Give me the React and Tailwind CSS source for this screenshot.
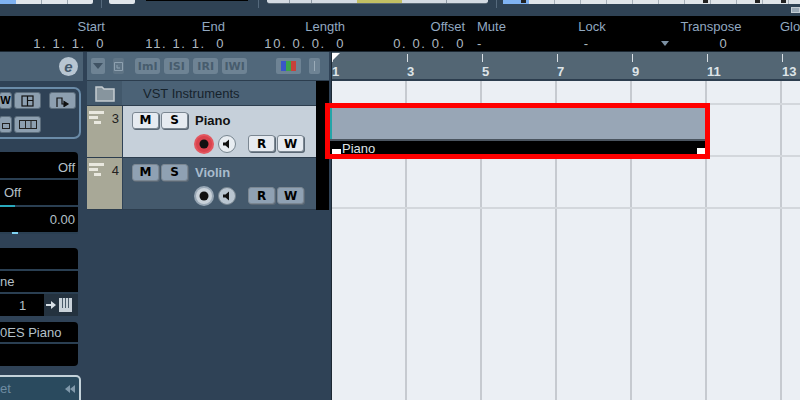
const barCells = [0, 1, 2, 3, 4, 5, 6];
const rulerLabels = ['1', '3', '5', '7', '9', '11', '13'];
const dividers = [0, 1, 2, 3, 4, 5, 6, 7, 8, 9, 10];
const markers = [6, 8, 9];

// Boutons de piste M S R W
const TrackButton = ({ label, active }) => (
    <div
        className={`w-[27px] h-[17px] rounded-[3px] border border-[#7b8792] shadow-[1px_1px_0_#5b6875] flex items-center justify-center text-[12px] font-bold leading-none text-black ${
            active ? 'bg-[#e6ebf1]' : 'bg-[#8fa1b3]'
        }`}
        style={{ fontFamily: '"DejaVu Sans", sans-serif' }}
    >
        {label}
    </div>
);

const LevelIcon = () => (
    <div className="flex flex-col gap-[2px] pt-[5px] pl-[2px]">
        <div className="w-[15px] h-[3px] bg-[#e9e8df]" />
        <div className="w-[9px] h-[3px] bg-[#e9e8df]" />
        <div className="w-[7px] h-[3px] ml-[5px] bg-[#e9e8df]" />
    </div>
);

const Track = ({ num, name, active }) => (
    <div className="flex h-[52px] border-b border-[#2c3d4e]">
        <div className="w-[35px] bg-[#a8a897] flex justify-between pr-[3px]">
            <LevelIcon />
            <span className="text-[13px] leading-none pt-[6px] text-[#222]">{num}</span>
        </div>
        <div className={`flex-1 ml-px flex flex-col pl-[9px] pr-[12px] ${active ? 'bg-[#c6d0da]' : 'bg-[#44596c]'}`}>
            <div className="flex items-center gap-[2px] pt-[5px] h-[23px]">
                <TrackButton label="M" active={active} />
                <TrackButton label="S" active={active} />
                <span className={`ml-[5px] text-[13px] font-bold leading-none ${active ? 'text-[#111]' : 'text-[#a9bccd]'}`}>{name}</span>
            </div>
            <div className="flex items-center justify-end mt-[4px] h-[21px]">
                <svg width="20" height="20" viewBox="0 0 20 20" className="mr-[4px]">
                    <circle cx="10" cy="10" r="10" fill={active ? '#e3565f' : '#98a7b5'} />
                    <circle cx="10" cy="10" r="8" fill={active ? '#d9434e' : '#c9d2da'} />
                    <circle cx="10" cy="10" r="4.5" fill="#111" />
                </svg>
                <svg width="18" height="18" viewBox="0 0 18 18" className="mr-[12px]">
                    <circle cx="9" cy="9" r="8.5" fill={active ? '#e8edf2' : '#b9c5d0'} stroke="#77858f" />
                    <path d="M5 7.5h2.5L11 4.5v9L7.5 10.5H5z" fill="#111" />
                </svg>
                <div className="flex gap-[2px]">
                    <TrackButton label="R" active={active} />
                    <TrackButton label="W" active={active} />
                </div>
            </div>
        </div>
    </div>
);

const HeaderButton = ({ label }) => (
    <div
        className="w-[25px] h-[16px] rounded-[3px] bg-[#6e8394] flex items-center justify-center text-[11px] font-bold leading-none text-[#475c6d]"
        style={{ fontFamily: '"DejaVu Sans", sans-serif' }}
    >
        {label}
    </div>
);

const InspectorButton = ({ children, width = 'w-[27px]', className = '' }) => (
    <div className={`${width} h-[17px] shrink-0 rounded-[3px] bg-[#8d9fb0] border border-[#5c6d7c] flex items-center justify-center overflow-hidden ${className}`}>
        {children}
    </div>
);

const Row = ({ height, children, className = '' }) => (
    <div className={`flex items-center border-b-2 border-[#2a3f52] text-[13px] leading-none text-[#b5c0c8] last:border-b-0 ${height} ${className}`}>
        {children}
    </div>
);

const InfoColumn = ({ label, value, width }) => (
    <div className={`${width} shrink-0 text-right`}>
        <div className="text-[#92a9c1]">{label}</div>
        <div className="text-[#aeb9c0] tracking-[1.6px]">{value}</div>
    </div>
);

export default function App() {
    return (
        <div
            className="relative w-[800px] h-[400px] overflow-hidden bg-[#2f4256] flex flex-col"
            style={{ fontFamily: '"Liberation Sans", Arial, sans-serif' }}
        >
            {/* Barre du haut */}
            <div className="h-[16px] shrink-0 bg-[#2f4254] flex items-start">
                <div className="w-[16px] shrink-0 h-[4px] bg-[#7fb2f2]" />
                <div className="w-[77px] shrink-0 h-[4px] bg-[#e1e6eb] rounded-br-[2px] flex">
                    <div className="w-[26px] border-r border-[#9aa6b0]" />
                    <div className="w-[26px] border-r border-[#9aa6b0]" />
                </div>
                <div className="w-px shrink-0 h-[8px] ml-[8px] bg-[#55697c]" />
                <div className="w-[26px] shrink-0 h-[4px] ml-[7px] bg-[#e1e6eb] rounded-b-[2px]" />
                <div className="w-[102px] shrink-0 h-[1px] ml-[11px] bg-black" />
                <div className="w-px shrink-0 h-[8px] ml-[10px] bg-[#55697c]" />
                <div className="flex shrink-0 h-[4px] ml-[8px] w-[221px] rounded-b-[3px] overflow-hidden border-b border-[#5c6b78]">
                    <div className="w-[23px] bg-[#d3dae2] border-r border-[#8d99a5]" />
                    <div className="w-[22px] bg-[#d3dae2] border-r border-[#8d99a5]" />
                    <div className="w-[45px] bg-[#d3dae2]" />
                    <div className="w-[45px] bg-[#c2bf63]" />
                    <div className="w-[45px] bg-[#d3dae2] border-r border-[#8d99a5]" />
                    <div className="flex-1 bg-[#d3dae2]" />
                </div>
                <div className="w-px shrink-0 h-[8px] ml-[8px] bg-[#55697c]" />
                <div className="w-[26px] shrink-0 h-[4px] ml-[6px] bg-[#7fb2f2] flex justify-end pr-[3px]">
                    <div className="w-[5px] h-[3px] bg-[#222]" />
                </div>
                <div className="flex-1 min-w-0 flex flex-col">
                    <div className="h-[4px] flex overflow-hidden bg-[#dfe4e9]">
                        {dividers.map((i) => (
                            <div key={i} className="w-[26px] h-full shrink-0 border-r border-[#a5afb8] flex justify-end">
                                {markers.includes(i) && <div className="w-[5px] h-[3px] mr-[2px] bg-[#222]" />}
                            </div>
                        ))}
                    </div>
                    <div className="ml-auto w-[9px] h-[6px] mt-[3px] bg-[#9aa9b6] border border-[#c3ccd4]" />
                </div>
            </div>

            {/* Ligne d'infos */}
            <div className="h-[36px] shrink-0 bg-black flex pt-[2px] text-[13px] leading-[17px] border-b border-[#1c2833]">
                <InfoColumn label="Start" value={<>1. 1. 1.&nbsp;&nbsp;0</>} width="w-[105px]" />
                <InfoColumn label="End" value={<>11. 1. 1.&nbsp;&nbsp;0</>} width="w-[120px]" />
                <InfoColumn label="Length" value={<>10. 0. 0.&nbsp;&nbsp;0</>} width="w-[120px]" />
                <InfoColumn label="Offset" value={<>0. 0. 0.&nbsp;&nbsp;0</>} width="w-[120px]" />
                <div className="w-[60px] shrink-0 pl-[12px]">
                    <div className="text-[#92a9c1]">Mute</div>
                    <div className="text-[#aeb9c0]">-</div>
                </div>
                <div className="w-[134px] shrink-0 text-center">
                    <div className="text-[#92a9c1]">Lock</div>
                    <div className="text-[#aeb9c0] pr-[12px]">-</div>
                </div>
                <div className="w-[20px] shrink-0 flex items-end pb-[5px] pl-[2px]">
                    <svg width="8" height="5" viewBox="0 0 8 5"><path d="M0 0h8L4 5z" fill="#7d91a4" /></svg>
                </div>
                <div className="w-[64px] shrink-0 text-center whitespace-nowrap">
                    <div className="text-[#92a9c1]">Transpose</div>
                    <div className="text-[#aeb9c0] pl-[24px]">0</div>
                </div>
                <div className="text-[#92a9c1] pl-[37px] shrink-0 whitespace-nowrap">Global</div>
            </div>

            <div className="flex flex-1 min-h-0">
                {/* Inspecteur */}
                <div className="w-[83px] shrink-0 flex flex-col overflow-hidden">
                    <div className="h-[29px] shrink-0 bg-[#4b6174] flex items-center justify-end pr-[5px]">
                        <div className="w-[19px] h-[19px] rounded-full bg-[#b8c6d2] flex items-center justify-center text-[15px] font-bold italic leading-none text-[#43596c]">
                            e
                        </div>
                    </div>
                    <div className="h-[52px] mt-[6px] mr-[2px] shrink-0 rounded-r-[7px] border-2 border-l-0 border-[#6a8ba8] flex flex-col gap-[7px] pt-[3px] pr-[3px]">
                        <div className="flex justify-end">
                            <InspectorButton width="w-[13px]" className="mr-[2px]"><span className="text-[11px] font-black text-black">W</span></InspectorButton>
                            <InspectorButton className="mr-[8px]">
                                <svg width="13" height="12" viewBox="0 0 13 12" fill="none" stroke="#111" strokeWidth="1.2">
                                    <rect x="1" y="1" width="11" height="10" /><path d="M6.5 1v10M6.5 5.5h5.5" />
                                </svg>
                            </InspectorButton>
                            <InspectorButton>
                                <svg width="15" height="12" viewBox="0 0 15 12" fill="none" stroke="#111" strokeWidth="1.2">
                                    <path d="M2 12V3h5v6h3" /><path d="M9 6.5l4 2.5-4 2.5z" fill="#111" />
                                </svg>
                            </InspectorButton>
                        </div>
                        <div className="flex gap-[2px] pr-[35px] justify-end">
                            <InspectorButton width="w-[13px]"><div className="w-[8px] h-[6px] mt-[3px] border border-[#222]" /></InspectorButton>
                            <InspectorButton>
                                <svg width="18" height="9" viewBox="0 0 18 9" fill="none" stroke="#222"><rect x="0.5" y="0.5" width="17" height="8" /><path d="M6.5 0v9M12 0v9" /></svg>
                            </InspectorButton>
                        </div>
                    </div>

                    <div className="mt-[13px] mr-[5px] shrink-0 bg-black rounded-r-[4px] flex flex-col">
                        <Row height="h-[28px]" className="justify-end pr-[3px] pt-[4px]">Off</Row>
                        <div className="relative">
                            <Row height="h-[27px]" className="pl-[4px]">Off</Row>
                            <div className="absolute left-0 bottom-0 w-[15px] h-[2px] bg-[#29a9bd]" />
                        </div>
                        <div className="relative">
                            <Row height="h-[27px]" className="justify-end pr-[3px]">0.00</Row>
                            <div className="absolute left-[12px] bottom-0 w-[6px] h-[2px] bg-[#7fd3f2]" />
                        </div>
                    </div>

                    <div className="mt-[14px] mr-[5px] shrink-0 bg-black rounded-r-[4px] flex flex-col">
                        <Row height="h-[23px]" />
                        <Row height="h-[23px]">ne</Row>
                        <div className="h-[22px] flex items-center text-[13px] leading-none text-[#b5c0c8]">
                            <span className="w-[44px] pl-[19px]">1</span>
                            <div className="flex-1 h-full bg-[#24323f] flex items-center gap-[3px] pl-[2px]">
                                <svg width="10" height="8" viewBox="0 0 10 8"><path d="M0 3h5V0l5 4-5 4V5H0z" fill="#d8e0e6" /></svg>
                                <svg width="13" height="14" viewBox="0 0 13 14"><rect width="13" height="14" fill="#c9d2d9" /><path d="M3.5 0v10M6.5 0v10M9.5 0v10" stroke="#4a5a68" /></svg>
                            </div>
                        </div>
                    </div>

                    <div className="mt-[6px] mr-[5px] shrink-0 bg-black rounded-r-[4px] flex flex-col">
                        <Row height="h-[22px]" className="whitespace-nowrap">0ES Piano</Row>
                        <Row height="h-[22px]" />
                    </div>

                    <div className="mt-[9px] mr-[2px] h-[30px] shrink-0 rounded-tr-[5px] border-2 border-l-0 border-[#c4d2da] bg-[#2a4a5e] flex items-center justify-between pl-0 pr-[4px] pb-[2px] text-[13px] text-[#6e8ca2]">
                        <span>et</span>
                        <svg width="10" height="8" viewBox="0 0 10 8"><path d="M5 0v8L0 4zM10 0v8L5 4z" fill="#8199ab" /></svg>
                    </div>
                </div>

                {/* Liste des pistes */}
                <div className="w-[242px] ml-[4px] shrink-0 flex flex-col">
                    <div className="h-[29px] shrink-0 bg-[#51687b] border-b border-[#2c3d4e] flex items-center pl-[4px] pr-[9px]">
                        <div className="w-[14px] h-[16px] rounded-[2px] bg-[#6e8394] flex items-center justify-center">
                            <svg width="10" height="6" viewBox="0 0 10 6"><path d="M0 0h10L5 6z" fill="#3f5263" /></svg>
                        </div>
                        <div className="w-[12px] h-[16px] ml-[8px] rounded-[2px] bg-[#5f7485] flex items-center justify-center">
                            <svg width="9" height="9" viewBox="0 0 9 9" fill="none" stroke="#8ea1b0"><path d="M.5.5h8v8h-8zM3 3v3h3" /></svg>
                        </div>
                        <div className="flex gap-[4px] ml-[11px]">
                            <HeaderButton label="ImI" />
                            <HeaderButton label="ISI" />
                            <HeaderButton label="IRI" />
                            <HeaderButton label="IWI" />
                        </div>
                        <div className="w-[26px] h-[16px] ml-[29px] rounded-[2px] bg-[#6e8394] flex items-center justify-center">
                            <div className="w-[5px] h-[10px] bg-[#3a55c8]" />
                            <div className="w-[5px] h-[10px] bg-[#3da34a]" />
                            <div className="w-[5px] h-[10px] bg-[#c8413a]" />
                        </div>
                        <div className="w-[11px] h-[16px] ml-[8px] rounded-[2px] bg-[#6e8394] flex items-center justify-center">
                            <div className="w-px h-[10px] bg-[#9aabb8]" />
                        </div>
                    </div>
                    <div className="flex">
                        <div className="w-[229px] flex flex-col">
                            <div className="h-[25px] flex border-b border-[#2c3d4e]">
                                <div className="w-[35px] bg-[#42586b] flex items-center justify-center">
                                    <svg width="20" height="17" viewBox="0 0 20 17" fill="#87959e" stroke="#c5ccd1" strokeWidth="1.5">
                                        <path d="M1 16V2h6l2 2h10v12z" />
                                    </svg>
                                </div>
                                <div className="flex-1 bg-[#4b6276] flex items-center pl-[21px] text-[13px] leading-none text-[#16222c]">
                                    VST Instruments
                                </div>
                            </div>
                            <Track num="3" name="Piano" active />
                            <Track num="4" name="Violin" />
                        </div>
                        <div className="flex-1 bg-black" />
                    </div>
                </div>

                {/* Zone d'arrangement */}
                <div className="relative flex-1 ml-[2px] flex flex-col border-l border-[#1c2833]">
                    <div className="h-[29px] shrink-0 bg-[#536674] border-b-2 border-[#2c3d4e] flex">
                        {barCells.map((i) => (
                            <div key={i} className="w-[75px] shrink-0 flex flex-col pl-0">
                                <div className="w-px h-[8px] mt-[2px] bg-[#d8dfe4]" />
                                <span className="mt-[3px] text-[13px] font-bold leading-none text-[#dde4e8]">{rulerLabels[i]}</span>
                            </div>
                        ))}
                    </div>
                    <div className="absolute left-0 top-[1px] w-0 h-0 border-t-[8px] border-r-[8px] border-t-white border-r-transparent" />
                    {[24, 52, 52].map((h, r) => (
                        <div key={r} className={`flex shrink-0 border-b-2 border-[#d3d7dc] ${h === 24 ? 'h-[24px]' : 'h-[52px]'}`}>
                            {barCells.map((i) => (
                                <div key={i} className="w-[75px] shrink-0 bg-[#ebeff4] border-r-2 border-[#c6cad0]" />
                            ))}
                        </div>
                    ))}
                    <div className="flex flex-1">
                        {barCells.map((i) => (
                            <div key={i} className="w-[75px] shrink-0 bg-[#ebeff4] border-r-2 border-[#c6cad0]" />
                        ))}
                    </div>

                    {/* Evénement encadré en rouge */}
                    <div className="absolute left-[-7px] top-[51px] w-[385px] h-[56px] border-[5px] border-[#ff0000] flex flex-col">
                        <div className="h-[31px] shrink-0 bg-[#98a6b6] border-l-2 border-[#22a5a8]" />
                        <div className="h-[2px] shrink-0 bg-[#4b5560]" />
                        <div className="relative h-[13px] shrink-0 bg-black text-[13px] leading-[15px] pl-[12px] text-[#dfe3e6]">
                            Piano
                            <div className="absolute left-[2px] bottom-0 w-[9px] h-[5px] bg-white" />
                            <div className="absolute right-0 bottom-0 w-[8px] h-[6px] bg-white" />
                        </div>
                    </div>
                </div>
            </div>
        </div>
    );
}
